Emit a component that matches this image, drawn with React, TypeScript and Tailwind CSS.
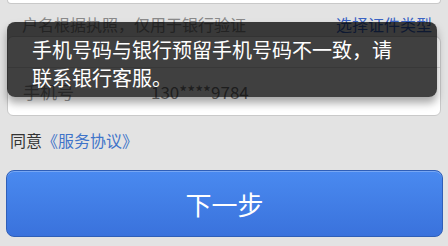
import React from 'react';

const font = { fontFamily: '"Noto Sans CJK SC", "Noto Sans", sans-serif' };

export default function App() {
  return (
    <div
      className="relative w-[448px] h-[246px] overflow-hidden bg-[#e3e3e3]"
      style={font}
    >
      {/* previous card edge */}
      <div className="mx-[7px] h-[4px] bg-white border border-t-0 border-[#c9c9c9] rounded-b-[6px]" />

      {/* section label */}
      <div className="mt-[8px] h-[24px] pl-[22px] pr-[16px] flex items-center justify-between text-[16px] whitespace-nowrap">
        <span className="text-[#8a8a8a]">户名根据执照，仅用于银行验证</span>
        <span className="text-[#3b64c4]">选择证件类型</span>
      </div>

      {/* form card */}
      <div className="mx-[7px] w-[434px] bg-white border border-[#c9c9c9] rounded-[6px]">
        <div className="h-[31px] border-b border-[#dddddd]" />
        <div className="h-[47px] flex items-center pl-[15px] text-[17px] text-[#9a9a9a]">
          <span className="w-[128px]">手机号</span>
          <span className="text-[#777]">130****9784</span>
        </div>
      </div>

      {/* agreement */}
      <div className="mt-[13px] h-[22px] px-[10px] flex items-center text-[16px]">
        <span className="text-[#333]">同意</span>
        <span className="text-[#3f74c9]">《服务协议》</span>
      </div>

      {/* next button */}
      <button className="mt-[19px] mx-[6px] w-[437px] h-[67px] rounded-[8px] border border-[#2f5fb8] bg-gradient-to-b from-[#4a8af0] to-[#3a72dc] text-white text-[26px] flex items-center justify-center shadow-[inset_0_1px_0_rgba(255,255,255,0.25)]">
        下一步
      </button>

      {/* toast */}
      <div className="absolute left-[7px] top-[22px] w-[430px] h-[75px] rounded-[8px] bg-black/75 shadow-[0_6px_8px_rgba(0,0,0,0.35)] pt-[14px] pl-[25px] text-white text-[20px] leading-[28px]">
        手机号码与银行预留手机号码不一致，请
        <br />
        联系银行客服。
      </div>
    </div>
  );
}
